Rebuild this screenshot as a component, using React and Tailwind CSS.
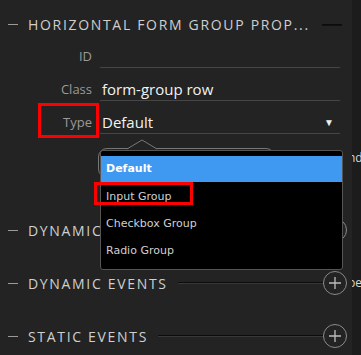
import React from "react";

const font = { fontFamily: '"Open Sans", "Noto Sans", sans-serif' };

function Heading({ title, rightLine = true, plus = true }) {
  return (
    <div className="flex h-[22px] items-center pl-[8px] pr-[5px]">
      <div className="h-px w-[10px] bg-[#9a9a9a]" />
      <div className="ml-[10px] whitespace-nowrap text-[14px] tracking-[0.12em] text-[#cfcfcf]">{title}</div>
      {rightLine && (
        <div className="ml-[10px] flex flex-1 flex-col">
          <div className="h-px bg-[#0c0c0c]" />
          <div className="h-px bg-[#383838]" />
        </div>
      )}
      {plus && (
        <div className="flex h-[24px] w-[24px] items-center justify-center rounded-full border border-[#8a8a8a]">
          <svg width="14" height="14" viewBox="0 0 14 14">
            <path d="M7 1v12M1 7h12" stroke="#bdbdbd" strokeWidth="1.3" />
          </svg>
        </div>
      )}
    </div>
  );
}

function Field({ label, value, caret }) {
  return (
    <div className="flex h-[33px] items-end">
      <div className="flex h-[22px] w-[92px] items-center justify-end text-[13px] text-[#9a9a9a]">{label}</div>
      <div className="ml-[8px] mr-[12px] flex h-[22px] flex-1 items-center border-b border-[#464646] pl-[2px] text-[15px] text-[#f2f2f2]">
        <span className="flex-1">{value}</span>
        {caret && <span className="mr-[6px] text-[10px] text-[#eeeeee]">▼</span>}
      </div>
    </div>
  );
}

export default function App() {
  const dd = { fontFamily: '"DejaVu Sans", Verdana, sans-serif' };
  return (
    <div className="relative flex h-[355px] w-[361px] overflow-hidden bg-[#232323]" style={font}>
      <div className="flex w-[352px] flex-col pt-[14px]">
        <div className="flex h-[21px] items-center pl-[8px] pr-[10px]">
          <div className="h-px w-[10px] bg-[#9a9a9a]" />
          <div className="ml-[10px] whitespace-nowrap text-[14px] tracking-[0.12em] text-[#cfcfcf]">HORIZONTAL FORM GROUP PROP...</div>
          <div className="flex-1" />
          <div className="flex w-[20px] flex-col">
            <div className="h-px bg-[#0c0c0c]" />
            <div className="h-px bg-[#111]" />
          </div>
        </div>
        <Field label="ID" value="" />
        <Field label="Class" value="form-group row" />
        <Field label="Type" value="Default" caret />
        <div className="h-[85px]" />
        <Heading title="DYNAMIC ATTRIBUTES" />
        <div className="h-[31px]" />
        <Heading title="DYNAMIC EVENTS" />
        <div className="h-[31px]" />
        <Heading title="STATIC EVENTS" />
      </div>
      <div className="relative flex-1 overflow-hidden bg-[#1c1c1c] text-[12px] text-[#d8d8d8]">
        <span className="absolute left-[-4px] top-[149px]">nd</span>
        <span className="absolute left-[-4px] top-[274px]">be</span>
      </div>

      {/* tooltip bubble behind the dropdown */}
      <div className="absolute left-[98px] top-[148px] h-[30px] w-[177px] rounded-[9px] border border-[#777] bg-[#232323]" />
      <svg className="absolute left-[127px] top-[139px]" width="30" height="11" viewBox="0 0 30 11">
        <path d="M0 10 L15 1 L30 10" fill="#232323" stroke="#777" strokeWidth="1" />
      </svg>

      {/* dropdown */}
      <div className="absolute left-[100px] top-[150px] h-[120px] w-[243px] rounded-[3px] border border-[#555] bg-black pt-[5px]" style={dd}>
        <div className="flex h-[26px] items-center bg-[#3f99f1] pl-[5px] pt-[1px] text-[11px] font-bold text-white">Default</div>
        <div className="flex h-[27px] items-center pl-[5px] pt-[4px] text-[11px] text-[#d0d0d0]">Input Group</div>
        <div className="flex h-[27px] items-center pl-[5px] pt-[4px] text-[11px] text-[#d0d0d0]">Checkbox Group</div>
        <div className="flex h-[27px] items-center pl-[5px] pt-[4px] text-[11px] text-[#d0d0d0]">Radio Group</div>
      </div>

      {/* red highlight boxes */}
      <div className="absolute left-[38px] top-[103px] h-[35px] w-[61px] border-[3px] border-[#ff0000]" />
      <div className="absolute left-[94px] top-[182px] h-[23px] w-[99px] border-[3px] border-[#ff0000]" />
    </div>
  );
}
